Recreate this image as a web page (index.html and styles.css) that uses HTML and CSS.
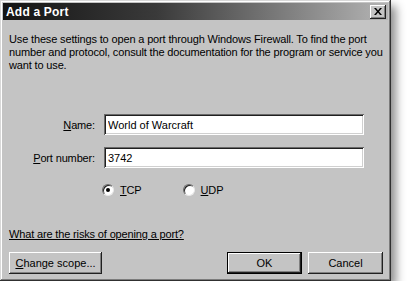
FILE: index.html
```html
<!DOCTYPE html>
<html lang="en">
<head>
    <meta charset="UTF-8">
    <title>Add a Port</title>
    <link rel="stylesheet" href="styles.css">
</head>
<body>
    <div class="window">
        <div class="titlebar">
            <span class="title">Add a Port</span>
            <button class="close" type="button" aria-label="Close">
                <svg width="8" height="7" viewBox="0 0 8 7">
                    <path d="M0 0h2l2 2.5 2-2.5h2l-3 3.5 3 3.5h-2l-2-2.5-2 2.5h-2l3-3.5z" fill="#000"/>
                </svg>
            </button>
        </div>
        <div class="body">
            <p class="intro">Use these settings to open a port through Windows Firewall. To find the port number and protocol, consult the documentation for the program or service you want to use.</p>

            <div class="fields">
                <div class="field">
                    <label for="port_name"><u>N</u>ame:</label>
                    <input id="port_name" type="text" value="World of Warcraft">
                </div>
                <div class="field">
                    <label for="port_number"><u>P</u>ort number:</label>
                    <input id="port_number" type="text" value="3742">
                </div>
            </div>

            <div class="radios">
                <label class="radio"><span class="dot checked"></span><span><u>T</u>CP</span></label>
                <label class="radio"><span class="dot"></span><span><u>U</u>DP</span></label>
            </div>

            <a class="link" href="#">What are the risks of opening a port?</a>

            <div class="buttons">
                <button class="btn" type="button"><u>C</u>hange scope...</button>
                <div class="right">
                    <button class="btn default" type="button">OK</button>
                    <button class="btn" type="button">Cancel</button>
                </div>
            </div>
        </div>
    </div>
</body>
</html>
```

FILE: styles.css
```css
body {
    margin: 0;
    background: #fff;
    font-family: 'Liberation Sans', Arial, sans-serif;
    font-size: 11px;
    letter-spacing: -0.15px;
    color: #000;
}
.window {
    width: 391px;
    height: 281px;
    box-sizing: border-box;
    padding: 3px;
    background: #c4c4c4;
    box-shadow: inset -1px -1px #303030, inset 1px 1px #d8d8d8,
                inset -2px -2px #7c7c7c, inset 2px 2px #fff,
                5px 6px 9px rgba(0, 0, 0, 0.45);
    display: flex;
    flex-direction: column;
}
.titlebar {
    height: 17px;
    background: linear-gradient(90deg, #141414 0%, #3a3a3a 40%, #b4b4b4 100%);
    display: flex;
    align-items: center;
    justify-content: space-between;
    padding: 0 2px 0 3px;
}
.title {
    color: #fff;
    font-weight: bold;
    font-size: 12px;
    letter-spacing: 0.2px;
}
.close {
    width: 16px;
    height: 14px;
    padding: 0;
    border: none;
    background: #c4c4c4;
    box-shadow: inset -1px -1px #202020, inset 1px 1px #fff, inset -2px -2px #808080;
    display: flex;
    align-items: center;
    justify-content: center;
}
.body {
    flex: 1;
    padding: 13px 5px 0 6px;
    display: flex;
    flex-direction: column;
}
.intro {
    margin: 0;
    line-height: 13px;
}
.fields {
    margin-top: 42px;
    display: flex;
    flex-direction: column;
    gap: 12px;
}
.field {
    display: flex;
    align-items: center;
}
.field label {
    width: 86px;
    text-align: right;
    margin-right: 9px;
}
.field input {
    width: 260px;
    height: 21px;
    box-sizing: border-box;
    border: none;
    padding: 0 4px;
    background: #fff;
    font: inherit;
    font-size: 11px;
    box-shadow: inset 1px 1px #6a6a6a, inset -1px -1px #fff,
                inset 2px 2px #202020, inset -2px -2px #d0d0d0;
    outline: none;
}
.radios {
    margin-top: 16px;
    padding-left: 93px;
    display: flex;
    gap: 41px;
}
.radio {
    display: flex;
    align-items: center;
    gap: 6px;
}
.dot {
    width: 12px;
    height: 12px;
    border-radius: 50%;
    box-sizing: border-box;
    background: #fff;
    border: 1px solid;
    border-color: #6a6a6a #e8e8e8 #e8e8e8 #6a6a6a;
    box-shadow: inset 1px 1px #202020;
    position: relative;
}
.dot.checked::after {
    content: "";
    position: absolute;
    left: 3px;
    top: 3px;
    width: 4px;
    height: 4px;
    border-radius: 50%;
    background: #000;
}
.link {
    margin-top: 32px;
    color: #000;
    text-decoration: underline;
    align-self: flex-start;
}
.buttons {
    margin-top: 12px;
    display: flex;
    justify-content: space-between;
    align-items: center;
}
.right {
    display: flex;
    gap: 6px;
}
.btn {
    height: 22px;
    border: none;
    background: #c4c4c4;
    font: inherit;
    font-size: 11px;
    padding: 0;
    box-shadow: inset -1px -1px #202020, inset 1px 1px #fff, inset -2px -2px #808080;
}
.btn:first-child {
    width: 93px;
}
.right .btn {
    width: 75px;
}
.btn.default {
    box-shadow: inset 0 0 0 1px #000, inset -2px -2px #202020,
                inset 2px 2px #fff, inset -3px -3px #808080;
}
```
